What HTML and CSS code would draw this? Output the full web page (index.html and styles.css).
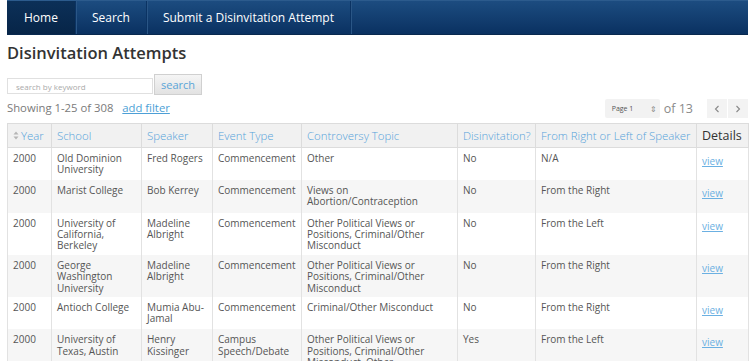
FILE: index.html
```html
<!DOCTYPE html>
<html>
<head>
<meta charset="utf-8">
<link rel="stylesheet" href="styles.css">
</head>
<body>
<div class="page">
  <nav class="navbar">
    <a class="nav-item active">Home</a>
    <a class="nav-item">Search</a>
    <a class="nav-item">Submit a Disinvitation Attempt</a>
  </nav>
  <h1 class="title">Disinvitation Attempts</h1>
  <div class="search-row">
    <input class="search-input" type="text" placeholder="search by keyword">
    <button class="search-btn">search</button>
  </div>
  <div class="info-row">
    <div class="showing">Showing 1-25 of 308 <a class="add-filter">add filter</a></div>
    <div class="pager">
      <div class="page-select"><span>Page 1</span><span class="updown">&#8661;</span></div>
      <span class="of">of 13</span>
      <div class="pager-btns">
        <span class="pbtn"><svg width="6" height="8" viewBox="0 0 6 8"><path d="M4.5 1 L1.5 4 L4.5 7" fill="none" stroke="#888" stroke-width="1.1"/></svg></span>
        <span class="pbtn"><svg width="6" height="8" viewBox="0 0 6 8"><path d="M1.5 1 L4.5 4 L1.5 7" fill="none" stroke="#888" stroke-width="1.1"/></svg></span>
      </div>
    </div>
  </div>
  <table class="grid">
    <colgroup>
      <col class="c-year"><col class="c-school"><col class="c-speaker"><col class="c-event"><col class="c-topic"><col class="c-dis"><col class="c-from"><col class="c-details">
    </colgroup>
    <thead>
      <tr>
        <th><span class="sort"><svg width="6" height="9" viewBox="0 0 6 9"><path d="M3 0.5 L5.5 3.5 L0.5 3.5 Z M3 8.5 L5.5 5.5 L0.5 5.5 Z" fill="#b5b5b5"/></svg></span>Year</th>
        <th>School</th>
        <th>Speaker</th>
        <th>Event Type</th>
        <th>Controversy Topic</th>
        <th>Disinvitation?</th>
        <th>From Right or Left of Speaker</th>
        <th class="details-h">Details</th>
      </tr>
    </thead>
    <tbody>
      <tr>
        <td>2000</td><td>Old Dominion University</td><td>Fred Rogers</td><td>Commencement</td><td>Other</td><td>No</td><td>N/A</td><td><a class="view">view</a></td>
      </tr>
      <tr>
        <td>2000</td><td>Marist College</td><td>Bob Kerrey</td><td>Commencement</td><td>Views on Abortion/Contraception</td><td>No</td><td>From the Right</td><td><a class="view">view</a></td>
      </tr>
      <tr>
        <td>2000</td><td>University of California, Berkeley</td><td>Madeline Albright</td><td>Commencement</td><td>Other Political Views or Positions, Criminal/Other Misconduct</td><td>No</td><td>From the Left</td><td><a class="view">view</a></td>
      </tr>
      <tr>
        <td>2000</td><td>George Washington University</td><td>Madeline Albright</td><td>Commencement</td><td>Other Political Views or Positions, Criminal/Other Misconduct</td><td>No</td><td>From the Right</td><td><a class="view">view</a></td>
      </tr>
      <tr>
        <td>2000</td><td>Antioch College</td><td>Mumia Abu-Jamal</td><td>Commencement</td><td>Criminal/Other Misconduct</td><td>No</td><td>From the Right</td><td><a class="view">view</a></td>
      </tr>
      <tr>
        <td>2000</td><td>University of Texas, Austin</td><td>Henry Kissinger</td><td>Campus Speech/Debate</td><td>Other Political Views or Positions, Criminal/Other Misconduct, Other</td><td>Yes</td><td>From the Left</td><td><a class="view">view</a></td>
      </tr>
    </tbody>
  </table>
</div>
</body>
</html>
```
FILE: styles.css
```css
html, body {
  margin: 0;
  padding: 0;
  background: #fff;
}
body {
  font-family: "Open Sans", "Liberation Sans", sans-serif;
  color: #555;
  overflow: hidden;
}
.page {
  width: 741px;
  margin-left: 7px;
}
.navbar {
  display: flex;
  height: 35px;
  background: linear-gradient(#1c4c80, #0a3161);
  border-top: 1px solid #2c5b8d;
  box-sizing: border-box;
  border-bottom: 1px solid #09294f;
}
.nav-item {
  display: flex;
  align-items: center;
  padding: 0 16px 0 16px;
  color: #fff;
  font-size: 12px;
  border-right: 1px solid #0b3363;
  box-shadow: 1px 0 0 #2a5686;
}
.nav-item.active {
  background: linear-gradient(#0c3058, #072548);
  padding: 0 17px;
}
.title {
  margin: 7px 0 0 0;
  font-size: 16.5px;
  font-weight: 600;
  color: #333;
  line-height: 22px;
}
.search-row {
  display: flex;
  align-items: flex-end;
  margin-top: 10px;
  height: 21px;
}
.search-input {
  width: 146px;
  height: 16px;
  box-sizing: border-box;
  border: 1px solid #e0e0e0;
  padding: 0 0 0 8px;
  margin: 0 1px 1px 0;
  font-family: "Open Sans", sans-serif;
  font-size: 8px;
  outline: none;
}
.search-input::placeholder {
  color: #aaa;
}
.search-btn {
  width: 48px;
  height: 21px;
  box-sizing: border-box;
  border: 1px solid #d0d0d0;
  background: linear-gradient(#f5f5f5, #e2e2e2);
  color: #5aa5d8;
  font-family: "Open Sans", sans-serif;
  font-size: 11px;
  padding: 0;
  line-height: 18px;
}
.info-row {
  display: flex;
  justify-content: space-between;
  align-items: center;
  margin-top: 4px;
  height: 19px;
}
.showing {
  font-size: 11.3px;
  color: #7a7a7a;
  line-height: 16px;
  margin-top: -2px;
}
.add-filter {
  color: #4d9fd6;
  text-decoration: underline;
  margin-left: 6px;
}
.pager {
  display: flex;
  align-items: center;
  height: 19px;
}
.page-select {
  width: 55px;
  height: 19px;
  box-sizing: border-box;
  background: #f2f2f2;
  border-radius: 2px;
  display: flex;
  justify-content: space-between;
  align-items: center;
  padding: 0 3px 0 7px;
  font-size: 7px;
  color: #555;
}
.updown {
  font-size: 8px;
  color: #888;
}
.of {
  font-size: 12.5px;
  color: #8a8a8a;
  margin: 0 14px 0 4px;
}
.pager-btns {
  display: flex;
  gap: 1px;
}
.pbtn {
  width: 20px;
  height: 19px;
  background: #f3f3f3;
  display: flex;
  align-items: center;
  justify-content: center;
}
.grid {
  margin-top: 5px;
  width: 741px;
  table-layout: fixed;
  border-collapse: collapse;
}
.c-year { width: 44px; }
.c-school { width: 90px; }
.c-speaker { width: 71px; }
.c-event { width: 89px; }
.c-topic { width: 156px; }
.c-dis { width: 78px; }
.c-from { width: 161px; }
.c-details { width: 52px; }
.grid th {
  height: 24px;
  box-sizing: border-box;
  background: #f1f1f1;
  border: 1px solid #dcdcdc;
  font-weight: 300;
  font-size: 11.4px;
  color: #55a2da;
  text-align: left;
  padding: 0 5px;
  white-space: nowrap;
  overflow: hidden;
}
.grid th.details-h {
  color: #333;
  font-weight: 400;
  font-size: 12.5px;
}
.sort {
  display: inline-block;
  margin-right: 2px;
  vertical-align: 0;
}
.grid tbody tr {
  height: 32.5px;
}
.grid td {
  font-size: 10px;
  line-height: 11.4px;
  padding: 5px 5px 3px 5px;
  vertical-align: top;
  border-left: 1px solid #e2e2e2;
  border-right: 1px solid #e2e2e2;
  color: #555;
}
.grid tbody tr:nth-child(even) td {
  background: #f6f6f6;
}
.view {
  display: inline-block;
  padding-top: 3px;
  color: #6bb0e2;
  text-decoration: underline;
}
```
